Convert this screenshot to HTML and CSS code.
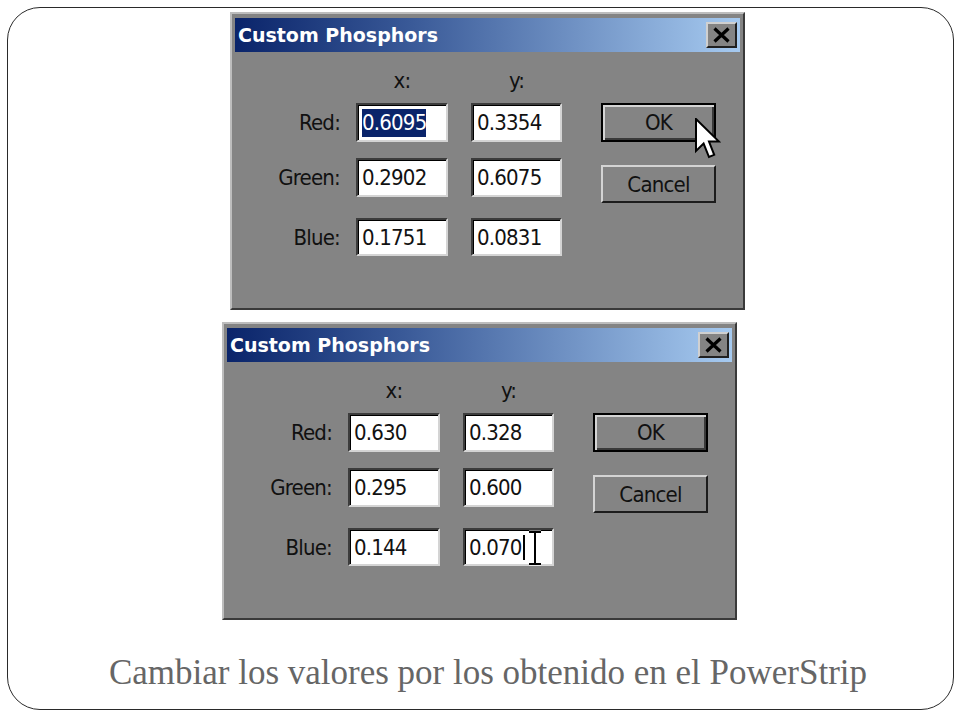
FILE: index.html
```html
<!DOCTYPE html>
<html lang="es">
<head>
<meta charset="utf-8">
<title>Custom Phosphors</title>
<link rel="stylesheet" href="styles.css">
</head>
<body>
<div class="slide">
  <div class="dialog d1">
    <div class="titlebar">
      <span class="title">Custom Phosphors</span>
      <span class="close"><svg width="19" height="16" viewBox="0 0 19 16"><path d="M2.5 1.5 L16.5 14.5 M16.5 1.5 L2.5 14.5" stroke="#000" stroke-width="3.2"/></svg></span>
    </div>
    <div class="body">
      <div class="fields">
        <div class="hdr"><span class="h-label"></span><span class="h-col">x:</span><span class="h-col col2">y:</span></div>
        <div class="row r1"><span class="label">Red:</span><span class="input"><span class="sel">0.6095</span></span><span class="input in2">0.3354</span></div>
        <div class="row r2"><span class="label">Green:</span><span class="input">0.2902</span><span class="input in2">0.6075</span></div>
        <div class="row r3"><span class="label">Blue:</span><span class="input">0.1751</span><span class="input in2">0.0831</span></div>
      </div>
      <div class="buttons">
        <div class="btn default">OK</div>
        <div class="btn cancel">Cancel</div>
      </div>
    </div>
    <svg class="arrow" width="26" height="42" viewBox="0 0 13 21"><path d="M0.5 0.5 L0.5 16.5 L4.3 12.8 L7 19.5 L9.6 18.4 L7 11.8 L12 11.8 Z" fill="#fff" stroke="#000" stroke-width="1"/></svg>
  </div>

  <div class="dialog d2">
    <div class="titlebar">
      <span class="title">Custom Phosphors</span>
      <span class="close"><svg width="19" height="16" viewBox="0 0 19 16"><path d="M2.5 1.5 L16.5 14.5 M16.5 1.5 L2.5 14.5" stroke="#000" stroke-width="3.2"/></svg></span>
    </div>
    <div class="body">
      <div class="fields">
        <div class="hdr"><span class="h-label"></span><span class="h-col">x:</span><span class="h-col col2">y:</span></div>
        <div class="row r1"><span class="label">Red:</span><span class="input">0.630</span><span class="input in2">0.328</span></div>
        <div class="row r2"><span class="label">Green:</span><span class="input">0.295</span><span class="input in2">0.600</span></div>
        <div class="row r3"><span class="label">Blue:</span><span class="input">0.144</span><span class="input in2">0.070<span class="caret"></span></span></div>
      </div>
      <div class="buttons">
        <div class="btn default">OK</div>
        <div class="btn cancel">Cancel</div>
      </div>
    </div>
    <svg class="ibeam" width="16" height="36" viewBox="0 0 16 36"><path d="M2 2 H6.5 V34 H2 M14 2 H9.5 V34 H14" fill="none" stroke="#fff" stroke-width="3"/><path d="M2 2 H14 M8 2 V34 M2 34 H14" fill="none" stroke="#000" stroke-width="2"/></svg>
  </div>

  <p class="caption">Cambiar los valores por los obtenido en el PowerStrip</p>
</div>
</body>
</html>
```

FILE: styles.css
```css
body {
  margin: 0;
  background: #fff;
}

.slide {
  margin: 7px 0 0 7px;
  width: 947px;
  height: 703px;
  box-sizing: border-box;
  border: 1px solid #2a2a2a;
  border-radius: 33px;
  display: flex;
  flex-direction: column;
  align-items: flex-start;
}

.dialog {
  position: relative;
  width: 515px;
  height: 298px;
  box-sizing: border-box;
  background: #848484;
  border: 2px solid;
  border-color: #bdbdbd #3a3a3a #3a3a3a #bdbdbd;
  padding: 4px 3px;
  font-family: "DejaVu Sans Condensed", "DejaVu Sans", sans-serif;
  font-stretch: condensed;
  font-size: 22px;
  letter-spacing: -0.8px;
  color: #111;
}

.d1 { margin: 4px 0 0 222px; }
.d2 { margin: 12px 0 0 214px; }

.titlebar {
  height: 34px;
  display: flex;
  align-items: center;
  justify-content: space-between;
  background: linear-gradient(to right, #0a246a 0%, #3a5a98 35%, #a6caf0 100%);
  padding: 0 3px;
}

.title {
  font-family: "DejaVu Sans", Verdana, sans-serif;
  font-stretch: normal;
  font-weight: bold;
  font-size: 19px;
  letter-spacing: 0;
  color: #fff;
}

.close {
  width: 31px;
  height: 26px;
  box-sizing: border-box;
  background: #848484;
  border: 2px solid;
  border-color: #d0d0d0 #202020 #202020 #d0d0d0;
  display: flex;
  align-items: center;
  justify-content: center;
}

.body {
  display: flex;
  padding-top: 17px;
}

.hdr {
  display: flex;
  height: 24px;
  line-height: 24px;
}

.h-label { width: 121px; }
.h-col { width: 92px; text-align: center; }
.h-col.col2 { width: 91px; margin-left: 23px; }

.row {
  display: flex;
  align-items: center;
  height: 39px;
}

.r1 { margin-top: 10px; }
.r2 { margin-top: 16px; }
.r3 { margin-top: 21px; height: 38px; }

.label {
  width: 105px;
  text-align: right;
  margin-right: 16px;
}

.input {
  width: 92px;
  height: 100%;
  box-sizing: border-box;
  background: #fff;
  border: 2px solid;
  border-color: #3c3c3c #d4d4d4 #d4d4d4 #3c3c3c;
  box-shadow: inset 1px 1px 0 #000;
  padding-left: 4px;
  display: flex;
  align-items: center;
}

.input.in2 {
  width: 91px;
  margin-left: 23px;
}

.sel {
  background: #0a246a;
  color: #fff;
  line-height: 28px;
}

.caret {
  display: inline-block;
  width: 2px;
  height: 25px;
  background: #000;
  margin-left: 1px;
}

.buttons {
  margin-left: 39px;
  padding-top: 34px;
  display: flex;
  flex-direction: column;
}

.btn {
  width: 115px;
  height: 39px;
  box-sizing: border-box;
  border: 2px solid;
  border-color: #d4d4d4 #1c1c1c #1c1c1c #d4d4d4;
  display: flex;
  align-items: center;
  justify-content: center;
}

.btn.default {
  border: 2px solid #000;
  box-shadow: inset 2px 2px 0 #d4d4d4, inset -2px -2px 0 #3a3a3a;
}

.btn.cancel {
  margin-top: 23px;
  height: 38px;
}

.arrow {
  position: absolute;
  left: 463px;
  top: 104px;
}

.ibeam {
  position: absolute;
  left: 303px;
  top: 206px;
}

.caption {
  align-self: stretch;
  margin: 33px 0 0;
  padding-left: 15px;
  text-align: center;
  font-family: "Liberation Serif", "Times New Roman", serif;
  font-size: 35px;
  color: #666;
}
```
